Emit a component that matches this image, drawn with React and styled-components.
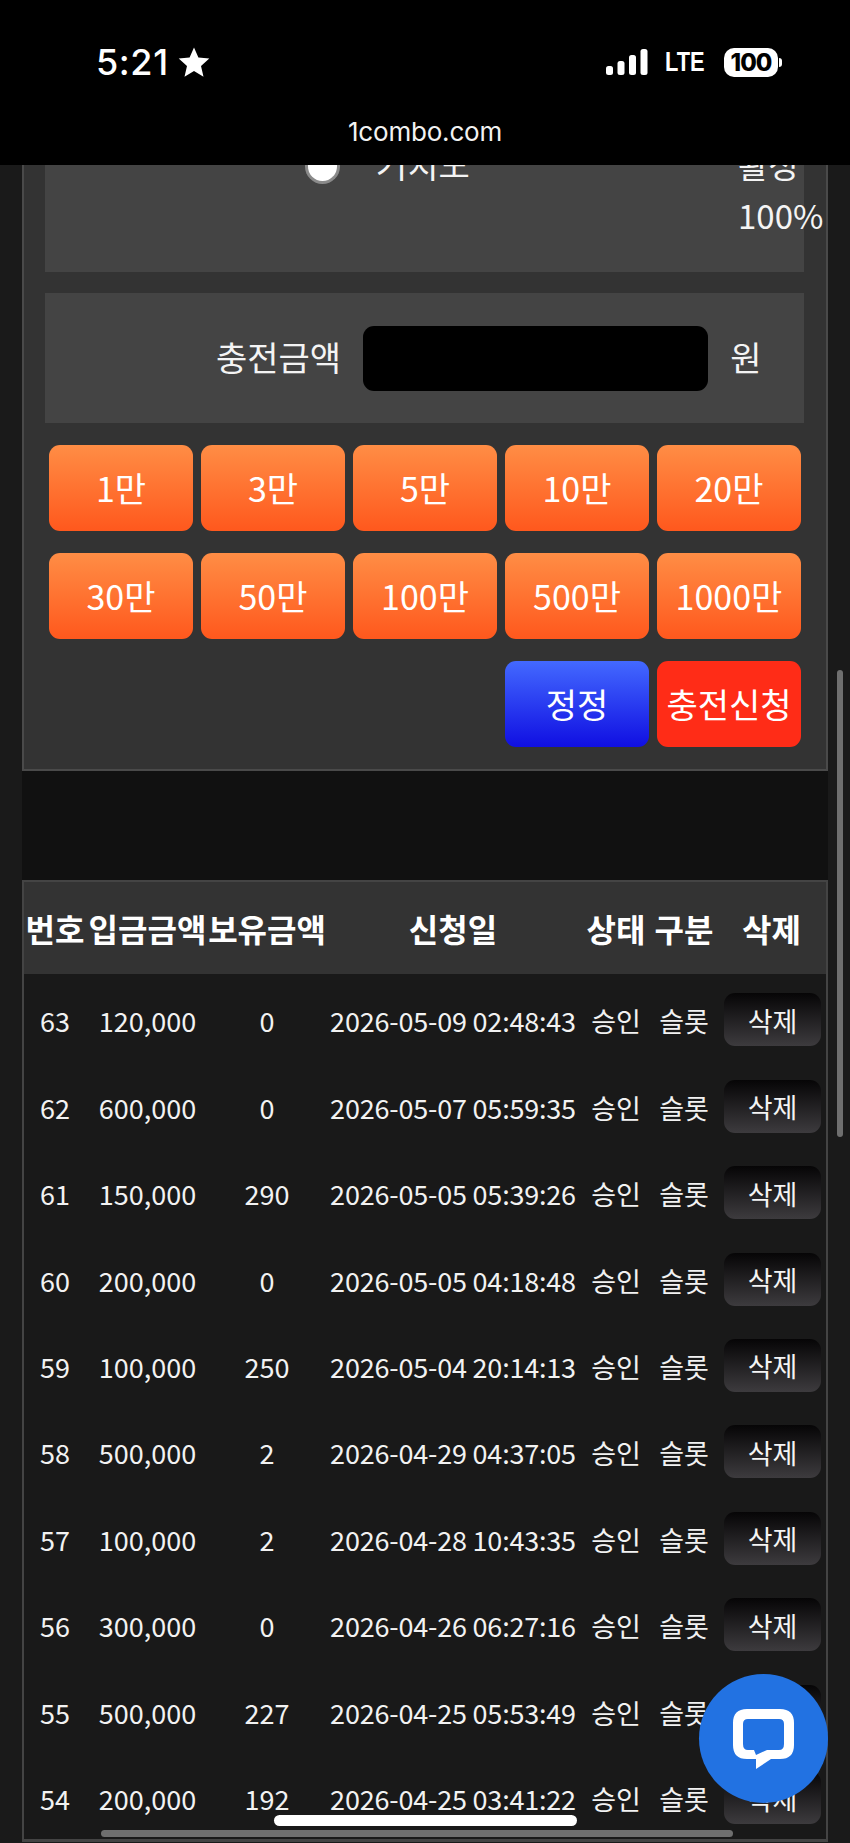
import React from "react";
import styled, { createGlobalStyle } from "styled-components";

const Global = createGlobalStyle`
  html, body { margin: 0; padding: 0; background: #1a1a1a; }
  * { box-sizing: border-box; }
  body { font-family: "Noto Sans CJK KR", "Noto Sans", sans-serif; color: #fff; }
`;

const Screen = styled.div`
  position: relative;
  width: 850px;
  height: 1843px;
  overflow: hidden;
  display: flex;
  flex-direction: column;
`;

const StatusBar = styled.header`
  flex: none;
  height: 165px;
  background: #000;
  display: flex;
  flex-direction: column;
  padding: 46px 68px 0 96px;
`;

const StatusRow = styled.div`
  display: flex;
  align-items: center;
  height: 32px;
`;

const Clock = styled.span`
  font: 500 36px/32px Inter, "Liberation Sans", sans-serif;
  letter-spacing: 0.6px;
`;

const StarIcon = styled.svg`
  width: 32px;
  height: 30px;
  margin-left: 9px;
  fill: #fff;
`;

const Indicators = styled.div`
  margin-left: auto;
  display: flex;
  align-items: center;
`;

const SignalIcon = styled.svg`
  width: 42px;
  height: 27px;
  fill: #fff;
`;

const Network = styled.span`
  font: 700 28px/32px "Liberation Sans", sans-serif;
  margin-left: 17px;
  width: 42px;
  transform: scaleX(0.78);
  transform-origin: left center;
  white-space: nowrap;
`;

const Battery = styled.span`
  margin-left: 17px;
  width: 54px;
  height: 29px;
  border-radius: 10px;
  background: #fff;
  color: #000;
  font: 800 24px/29px Inter, "Liberation Sans", sans-serif;
  letter-spacing: -1px;
  text-align: center;
`;

const BatteryNub = styled.span`
  width: 3px;
  height: 9px;
  margin-left: 1px;
  background: #fff;
  border-radius: 0 3px 3px 0;
`;

const Address = styled.div`
  margin: 37px 0 0 -96px;
  width: 850px;
  text-align: center;
  font: 400 26px/34px Inter, "Liberation Sans", sans-serif;
  letter-spacing: -0.2px;
  color: #f2f2f2;
`;

const Viewport = styled.main`
  flex: 1;
  overflow: hidden;
  background: #1a1a1a;
`;

const Column = styled.div`
  width: 806px;
  margin: -40px 0 0 22px;
  background: #111;
  display: flex;
  flex-direction: column;
`;

const Panel = styled.section`
  background: #333;
  border: solid #4a4a4a;
  border-width: 0 2px 2px;
  padding: 0 22px 22px 21px;
  display: flex;
  flex-direction: column;
`;

const RateBox = styled.div`
  height: 147px;
  background: #444;
  display: flex;
  align-items: flex-start;
  padding: 22px 0 0 260px;
`;

const Radio = styled.span`
  flex: none;
  width: 35px;
  height: 35px;
  margin-top: 2px;
  border-radius: 50%;
  background: #fff;
  border: 3px solid #8a8a8a;
  border-top-color: #ddd;
`;

const RateName = styled.span`
  font-size: 34px;
  line-height: 40px;
  margin: -3px 0 0 36px;
  color: #f4f4f4;
`;

const RateValues = styled.div`
  margin: -8px 0 0 auto;
  width: 66px;
  font-size: 33px;
  line-height: 51px;
  white-space: nowrap;
  color: #f4f4f4;
`;

const AmountBox = styled.div`
  margin-top: 21px;
  height: 130px;
  background: #444;
  display: flex;
  align-items: center;
  padding-left: 171px;
  gap: 22px;
`;

const AmountLabel = styled.span`
  font-size: 34px;
  line-height: 40px;
  margin-top: -2px;
  color: #f4f4f4;
  white-space: nowrap;
`;

const AmountInput = styled.div`
  width: 345px;
  height: 65px;
  border-radius: 11px;
  background: #000;
`;

const ButtonGrid = styled.div`
  margin-top: 22px;
  padding: 0 4px;
  display: grid;
  grid-template-columns: repeat(5, 144px);
  grid-auto-rows: 86px;
  gap: 22px 8px;
`;

const fills = {
  orange: "linear-gradient(#ff8d45, #ff581d)",
  blue: "linear-gradient(#4369ff, #100fe2)",
  red: "#ff2c17",
};

const ActionButton = styled.button`
  grid-column: ${(p) => p.$col || "auto"};
  border: 0;
  padding: 0;
  border-radius: 11px;
  background: ${(p) => fills[p.$tone]};
  color: #fff;
  font: 400 34px/40px "Noto Sans CJK KR", sans-serif;
  white-space: nowrap;
`;

const TableFrame = styled.section`
  margin-top: 109px;
  height: 962px;
  background: #191919;
  border: 2px solid #444;
  border-bottom-width: 3px;
  overflow: hidden;
`;

const columns = "62px 123px 116px 256px 70px 66px 109px";

const HeadRow = styled.div`
  display: grid;
  grid-template-columns: ${columns};
  height: 92px;
  padding-bottom: 1px;
  align-items: center;
  background: #333;
  font-size: 32px;
  font-weight: 700;
  white-space: nowrap;
  margin-bottom: 3px;
`;

const HeadCell = styled.div`
  display: flex;
  justify-content: center;
`;

const DataRow = styled.div`
  display: grid;
  grid-template-columns: ${columns};
  height: 86.44px;
  align-items: center;
  font-size: 27px;
  white-space: nowrap;
  color: #f2f2f2;
`;

const DataCell = styled.div`
  display: flex;
  justify-content: center;
  margin-top: 1px;
  letter-spacing: ${(p) => (p.$date ? "-0.2px" : "0")};
`;

const DeleteButton = styled.button`
  justify-self: end;
  margin-right: 5px;
  margin-top: -1px;
  width: 97px;
  height: 53px;
  border: 0;
  padding: 2px 0 0;
  border-radius: 11px;
  background: linear-gradient(#060506, #3d3b3e);
  color: #f4f4f4;
  font: 400 27px/34px "Noto Sans CJK KR", sans-serif;
`;

const ScrollV = styled.div`
  position: absolute;
  left: 837px;
  top: 670px;
  width: 6px;
  height: 467px;
  border-radius: 3px;
  background: #6f6f6f;
`;

const ScrollH = styled.div`
  position: absolute;
  left: 101px;
  top: 1830px;
  width: 632px;
  height: 7px;
  border-radius: 4px;
  background: #6f6f6f;
`;

const HomeIndicator = styled.div`
  position: absolute;
  left: 274px;
  top: 1815px;
  width: 303px;
  height: 11px;
  border-radius: 6px;
  background: #fff;
`;

const ChatBubble = styled.div`
  position: absolute;
  left: 699px;
  top: 1674px;
  width: 129px;
  height: 129px;
  border-radius: 50%;
  background: #2272e2;
  display: flex;
  align-items: center;
  justify-content: center;
`;

const ChatIcon = styled.svg`
  width: 61px;
  height: 60px;
  fill: #fff;
`;

const presets = ["1만", "3만", "5만", "10만", "20만", "30만", "50만", "100만", "500만", "1000만"];

const rows = [
  ["63", "120,000", "0", "2026-05-09 02:48:43"],
  ["62", "600,000", "0", "2026-05-07 05:59:35"],
  ["61", "150,000", "290", "2026-05-05 05:39:26"],
  ["60", "200,000", "0", "2026-05-05 04:18:48"],
  ["59", "100,000", "250", "2026-05-04 20:14:13"],
  ["58", "500,000", "2", "2026-04-29 04:37:05"],
  ["57", "100,000", "2", "2026-04-28 10:43:35"],
  ["56", "300,000", "0", "2026-04-26 06:27:16"],
  ["55", "500,000", "227", "2026-04-25 05:53:49"],
  ["54", "200,000", "192", "2026-04-25 03:41:22"],
];

const heads = ["번호", "입금금액", "보유금액", "신청일", "상태", "구분", "삭제"];

export default function App() {
  return (
    <Screen>
      <Global />
      <StatusBar>
        <StatusRow>
          <Clock>5:21</Clock>
          <StarIcon viewBox="0 0 32 30">
            <path d="M16 0.5l4.4 10.1 10.9 1-8.3 7.3 2.5 10.8L16 24l-9.5 5.7L9 18.9 0.7 11.6l10.9-1z" />
          </StarIcon>
          <Indicators>
            <SignalIcon viewBox="0 0 42 27">
              <rect x="0" y="17" width="7" height="9" rx="2.5" />
              <rect x="11.5" y="12" width="7" height="14" rx="2.5" />
              <rect x="23" y="6" width="7" height="20" rx="2.5" />
              <rect x="34.5" y="0" width="7" height="26" rx="2.5" />
            </SignalIcon>
            <Network>LTE</Network>
            <Battery>100</Battery>
            <BatteryNub />
          </Indicators>
        </StatusRow>
        <Address>1combo.com</Address>
      </StatusBar>

      <Viewport>
        <Column>
          <Panel>
            <RateBox>
              <Radio />
              <RateName>거치도</RateName>
              <RateValues>
                활성
                <br />
                100%
              </RateValues>
            </RateBox>
            <AmountBox>
              <AmountLabel>충전금액</AmountLabel>
              <AmountInput />
              <AmountLabel>원</AmountLabel>
            </AmountBox>
            <ButtonGrid>
              {presets.map((p) => (
                <ActionButton key={p} $tone="orange">{p}</ActionButton>
              ))}
              <ActionButton $tone="blue" $col="4">정정</ActionButton>
              <ActionButton $tone="red" $col="5">충전신청</ActionButton>
            </ButtonGrid>
          </Panel>

          <TableFrame>
            <HeadRow>
              {heads.map((h) => (
                <HeadCell key={h}>{h}</HeadCell>
              ))}
            </HeadRow>
            {rows.map((r) => (
              <DataRow key={r[0]}>
                {r.map((c, i) => (
                  <DataCell key={i} $date={i === 3}>{c}</DataCell>
                ))}
                <DataCell>승인</DataCell>
                <DataCell>슬롯</DataCell>
                <DeleteButton>삭제</DeleteButton>
              </DataRow>
            ))}
          </TableFrame>
        </Column>
      </Viewport>

      <ScrollV />
      <ScrollH />
      <ChatBubble>
        <ChatIcon viewBox="0 0 61 60">
          <path
            fillRule="evenodd"
            d="M14 0H47Q61 0 61 14V36Q61 50 47 50H38L23 60V50H14Q0 50 0 36V14Q0 0 14 0ZM15 10Q10 10 10 15V35Q10 41 15 41H21L23 46L34 41H46Q51 41 51 35V15Q51 10 46 10Z"
          />
        </ChatIcon>
      </ChatBubble>
      <HomeIndicator />
    </Screen>
  );
}
